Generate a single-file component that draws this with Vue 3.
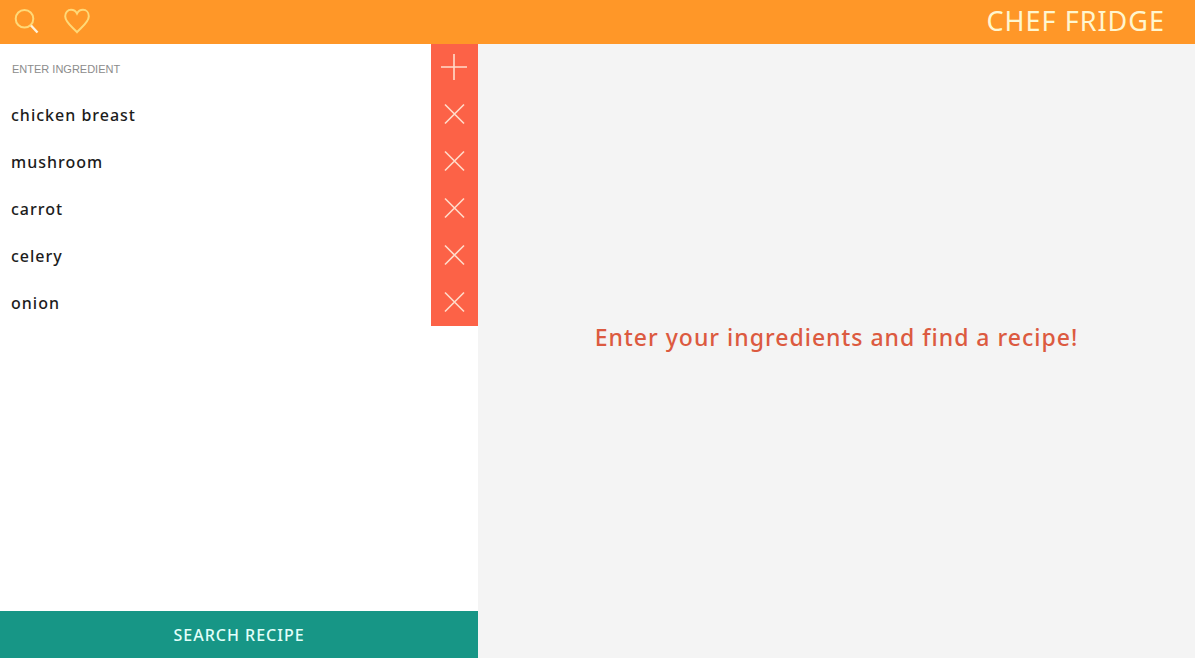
<script setup>
import { ref } from 'vue'

const draft = ref('')
const ingredients = ref(['chicken breast', 'mushroom', 'carrot', 'celery', 'onion'])

function add() {
  const name = draft.value.trim()
  if (name) ingredients.value.push(name)
  draft.value = ''
}

function remove(index) {
  ingredients.value.splice(index, 1)
}
</script>

<template>
  <div class="app">
    <header class="bar">
      <nav class="nav">
        <button type="button" class="icon" aria-label="Search">
          <svg width="26" height="26" viewBox="0 0 26 26">
            <circle cx="10.500" cy="10.800" r="8.800" />
            <path class="handle" d="M17 17.500L23.500 24.500" />
          </svg>
        </button>
        <button type="button" class="icon" aria-label="Favourites">
          <svg width="26" height="26" viewBox="0 0 26 26">
            <path d="M13 24.200C9.500 20 1.200 14.500 1.200 8.200C1.200 4.400 3.800 1.800 7 1.800C9.800 1.800 11.800 3.200 13 5.600C14.200 3.200 16.200 1.800 19 1.800C22.200 1.800 24.800 4.400 24.800 8.200C24.800 14.500 16.500 20 13 24.200Z" />
          </svg>
        </button>
      </nav>
      <h1 class="title">CHEF FRIDGE</h1>
    </header>

    <main class="body">
      <section class="panel">
        <form class="row" @submit.prevent="add">
          <input v-model="draft" class="entry" type="text" placeholder="ENTER INGREDIENT" aria-label="Enter ingredient" />
          <button type="submit" class="action" aria-label="Add ingredient">
            <svg width="27" height="27" viewBox="0 0 27 27"><path d="M13 0V26M0 13H26" /></svg>
          </button>
        </form>
        <ul class="list">
          <li v-for="(item, i) in ingredients" :key="item" class="row">
            <span class="name">{{ item }}</span>
            <button type="button" class="action" :aria-label="'Remove ' + item" @click="remove(i)">
              <svg width="27" height="27" viewBox="0 0 27 27"><path d="M4 3.500L23 22.500M23 3.500L4 22.500" /></svg>
            </button>
          </li>
        </ul>
        <button type="button" class="search">SEARCH RECIPE</button>
      </section>
      <section class="result">
        <p class="message">Enter your ingredients and find a recipe!</p>
      </section>
    </main>
  </div>
</template>

<style>
body {
  margin: 0;
}
</style>

<style scoped>
.app {
  display: flex;
  flex-direction: column;
  min-height: 100vh;
  font-family: "Noto Sans", "Open Sans", sans-serif;
}

button {
  margin: 0;
  padding: 0;
  border: 0;
  font-family: inherit;
  cursor: pointer;
}

svg {
  display: block;
  fill: none;
}

.bar {
  display: flex;
  align-items: center;
  justify-content: space-between;
  box-sizing: border-box;
  height: 44px;
  padding: 0 30px 2px 14px;
  background: #ff9728;
}

.nav {
  display: flex;
  gap: 24px;
}

.icon {
  background: none;
}

.icon svg {
  stroke: #ffd978;
  stroke-width: 2;
}

.icon .handle {
  stroke: #fff3dc;
  stroke-width: 2.4;
}

.title {
  margin: 0;
  color: #fff6cf;
  font-size: 27px;
  font-weight: 400;
  line-height: 40px;
  letter-spacing: 1px;
}

.body {
  display: flex;
  flex: 1;
}

.panel {
  display: flex;
  flex-direction: column;
  width: 40%;
  background: #fff;
}

.row {
  display: flex;
  align-items: stretch;
  height: 47px;
}

.list {
  flex: 1;
  margin: 0;
  padding: 0;
  list-style: none;
}

.entry {
  flex: 1;
  min-width: 0;
  padding: 2px 12px 0;
  border: 0;
  outline: 0;
  background: none;
  color: #222;
  font-family: "Liberation Sans", Arial, sans-serif;
  font-size: 11px;
}

.entry::placeholder {
  color: #8c8c8c;
  opacity: 1;
}

.name {
  flex: 1;
  padding-left: 11px;
  color: #1c1c1c;
  font-size: 16px;
  font-weight: 500;
  line-height: 48px;
  letter-spacing: 1px;
}

.action {
  display: grid;
  place-items: center;
  width: 47px;
  background: #fc6247;
}

.action svg {
  stroke: #ffdccb;
  stroke-width: 1.6;
}

.search {
  height: 47px;
  background: #179686;
  color: #e2fffa;
  font-size: 16px;
  font-weight: 500;
  letter-spacing: 1px;
}

.result {
  display: grid;
  flex: 1;
  place-items: center;
  background: #f4f4f4;
}

.message {
  margin: 0;
  padding-bottom: 28px;
  color: #dc5a40;
  font-size: 23px;
  font-weight: 500;
  line-height: 32px;
  letter-spacing: 1px;
}
</style>
